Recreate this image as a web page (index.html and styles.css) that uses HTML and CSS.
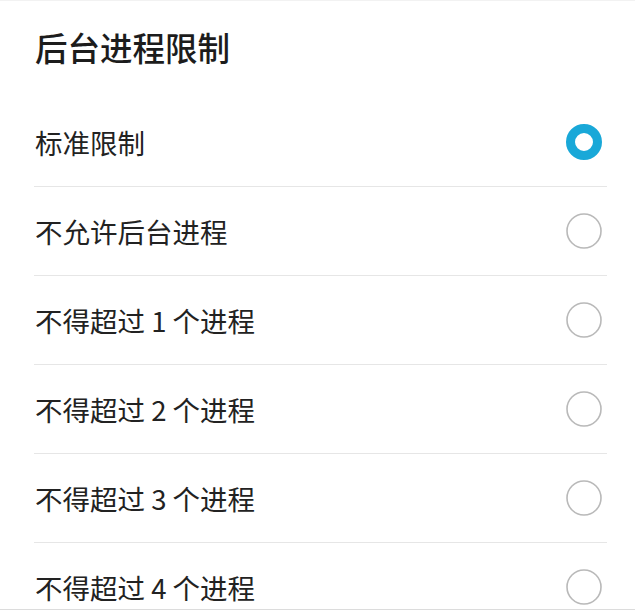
FILE: index.html
```html
<!DOCTYPE html>
<html lang="zh-CN">
<head>
  <meta charset="UTF-8">
  <meta name="viewport" content="width=device-width, initial-scale=1.0">
  <title>后台进程限制</title>
  <link rel="stylesheet" href="styles.css">
</head>
<body>
  <div class="dialog">
    <h1 class="dialog-title">后台进程限制</h1>
    <ul class="options">
      <li class="option">
        <span class="option-label">标准限制</span>
        <svg class="radio" width="38" height="38" viewBox="0 0 38 38">
          <circle cx="19" cy="19" r="13.5" fill="none" stroke="#19a8d8" stroke-width="9"/>
        </svg>
      </li>
      <li class="option">
        <span class="option-label">不允许后台进程</span>
        <svg class="radio" width="38" height="38" viewBox="0 0 38 38">
          <circle cx="19" cy="19" r="17" fill="none" stroke="#b9b9b9" stroke-width="1.6"/>
        </svg>
      </li>
      <li class="option">
        <span class="option-label">不得超过 1 个进程</span>
        <svg class="radio" width="38" height="38" viewBox="0 0 38 38">
          <circle cx="19" cy="19" r="17" fill="none" stroke="#b9b9b9" stroke-width="1.6"/>
        </svg>
      </li>
      <li class="option">
        <span class="option-label">不得超过 2 个进程</span>
        <svg class="radio" width="38" height="38" viewBox="0 0 38 38">
          <circle cx="19" cy="19" r="17" fill="none" stroke="#b9b9b9" stroke-width="1.6"/>
        </svg>
      </li>
      <li class="option">
        <span class="option-label">不得超过 3 个进程</span>
        <svg class="radio" width="38" height="38" viewBox="0 0 38 38">
          <circle cx="19" cy="19" r="17" fill="none" stroke="#b9b9b9" stroke-width="1.6"/>
        </svg>
      </li>
      <li class="option">
        <span class="option-label">不得超过 4 个进程</span>
        <svg class="radio" width="38" height="38" viewBox="0 0 38 38">
          <circle cx="19" cy="19" r="17" fill="none" stroke="#b9b9b9" stroke-width="1.6"/>
        </svg>
      </li>
    </ul>
  </div>
</body>
</html>
```

FILE: styles.css
```css
body {
  margin: 0;
  padding: 0;
  background-color: #ffffff;
  font-family: "Noto Sans CJK SC", "Noto Sans", sans-serif;
  color: #222222;
}
.dialog {
  height: 608px;
  overflow: hidden;
  border-top: 1px solid #f2f2f2;
  border-bottom: 1px solid #dcdcdc;
}
.dialog-title {
  margin: 0;
  height: 91px;
  padding: 0 0 6px 35px;
  display: flex;
  align-items: center;
  font-size: 32.5px;
  font-weight: 500;
  color: #1c1c1c;
}
.options {
  list-style: none;
  margin: 0 28px 0 34px;
  padding: 0;
}
.option {
  height: 88px;
  display: flex;
  align-items: center;
  justify-content: space-between;
  padding: 0 4px 0 1px;
  border-bottom: 1px solid #e6e6e6;
}
.option-label {
  font-size: 27.5px;
  color: #222222;
}
.radio {
  display: block;
}
```
